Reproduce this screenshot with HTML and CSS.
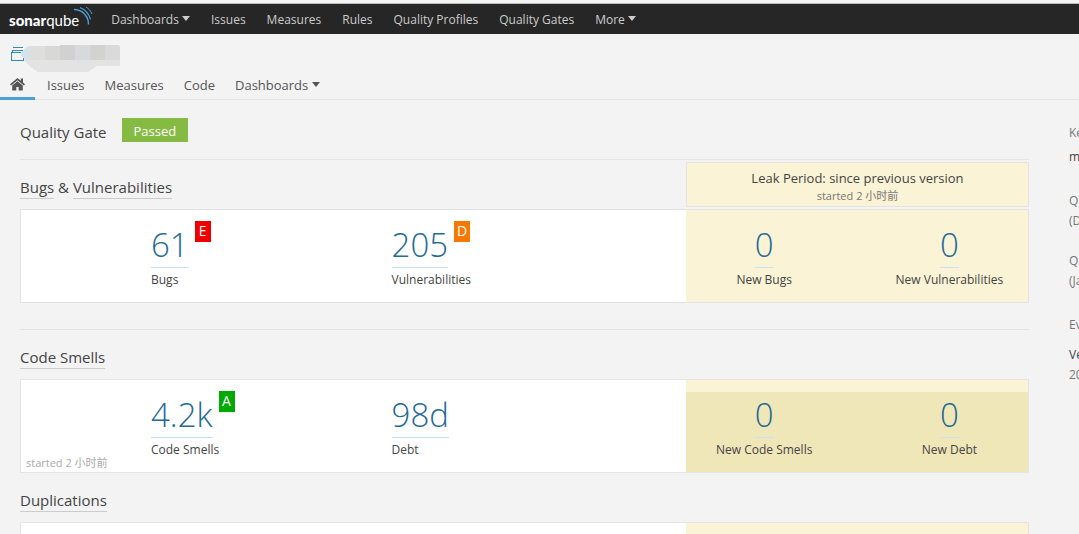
FILE: index.html
```html
<!DOCTYPE html>
<html lang="en">
<head>
<meta charset="utf-8">
<title>SonarQube</title>
<link rel="stylesheet" href="styles.css">
</head>
<body>
<nav class="navbar">
  <a class="logo" href="#" aria-label="sonarqube"><span class="logo-text"><b>sonar</b>qube</span><svg class="logo-waves" width="20" height="20" viewBox="0 0 20 20" fill="none" stroke="#4b9fd5"><path d="M1 3.500C9 3.500 15.500 10 15.500 18.500" stroke-width="1.500"/><path d="M7 1.500C12 3.500 16 8 17.500 13.500" stroke-width="1.200"/><path d="M13 1C15.500 2.500 17.800 5 19 8" stroke-width="1"/></svg></a>
  <a href="#">Dashboards <i class="caret"></i></a>
  <a href="#">Issues</a>
  <a href="#">Measures</a>
  <a href="#">Rules</a>
  <a href="#">Quality Profiles</a>
  <a href="#">Quality Gates</a>
  <a href="#">More <i class="caret"></i></a>
</nav>
<header class="context">
  <div class="project">
    <svg width="110" height="30" viewBox="0 0 110 30" shape-rendering="crispEdges">
      <path d="M3 4.500h10M2.500 9V7.500h11V9M1.500 9.500h12v8h-12z" fill="none" stroke="#2d8bc0"/>
      <path d="M11 10l3-4 5-3v15l-5-2-3-3z" fill="#d2e3ee"/>
      <path d="M13 17h97v6H87l-9 6H28l-9-6z" fill="#e3e3e3"/>
      <path d="M19 3h16v14H19z" fill="#dededd"/><path d="M35 3h15v14H35z" fill="#d8d8d6"/>
      <path d="M50 2h15v15H50z" fill="#d1d1d1"/><path d="M65 2h15v15H65z" fill="#d8d9dc"/>
      <path d="M80 2h15v15H80z" fill="#d2d2d1"/><path d="M95 2h13l2 2v13H95z" fill="#dadada"/>
    </svg>
  </div>
  <nav class="tabs">
    <a class="home" href="#" aria-label="Home"><svg width="15" height="13" viewBox="0 0 15 13" fill="#555"><path d="M7.500 0L0 6.300l1.100 1.300L7.500 2.300l6.400 5.300L15 6.300l-2-1.700V.6h-2.200v2.100z"/><path d="M7.500 3.200L2.200 7.600V12.600h4.100V9h2.400v3.600h4.100V7.600z"/></svg></a>
    <a href="#">Issues</a>
    <a href="#">Measures</a>
    <a href="#">Code</a>
    <a href="#">Dashboards <i class="caret"></i></a>
  </nav>
</header>
<div class="page">
  <main class="overview">
    <div class="gate"><h2>Quality Gate</h2><span class="badge">Passed</span></div>
    <section class="domain ruled">
      <div class="domain-head">
        <h2><a href="#">Bugs</a> &amp; <a href="#">Vulnerabilities</a></h2>
        <div class="legend">Leak Period: since previous version<small>started 2 小时前</small></div>
      </div>
      <div class="panel">
        <div class="measures">
          <div class="measure"><div class="value"><a href="#">61</a><span class="rating rating-e">E</span></div>Bugs</div>
          <div class="measure"><div class="value"><a href="#">205</a><span class="rating rating-d">D</span></div>Vulnerabilities</div>
        </div>
        <div class="leak">
          <div class="measure"><div class="value"><a href="#">0</a></div>New Bugs</div>
          <div class="measure"><div class="value"><a href="#">0</a></div>New Vulnerabilities</div>
        </div>
      </div>
    </section>
    <section class="domain ruled">
      <div class="domain-head"><h2><a href="#">Code Smells</a></h2></div>
      <div class="panel">
        <div class="measures">
          <div class="measure"><div class="value"><a href="#">4.2k</a><span class="rating rating-a">A</span></div>Code Smells</div>
          <div class="measure"><div class="value"><a href="#">98d</a></div>Debt</div>
          <span class="started">started 2 小时前</span>
        </div>
        <div class="leak trend">
          <div class="measure"><div class="value"><a href="#">0</a></div>New Code Smells</div>
          <div class="measure"><div class="value"><a href="#">0</a></div>New Debt</div>
        </div>
      </div>
    </section>
    <section class="domain last">
      <div class="domain-head"><h2><a href="#">Duplications</a></h2></div>
      <div class="panel">
        <div class="measures"></div>
        <div class="leak"></div>
      </div>
    </section>
  </main>
  <aside class="meta">
    <dl>
      <dt>Ke</dt><dd class="strong">m</dd>
      <dt>Q</dt><dd>(D</dd>
      <dt>Q</dt><dd class="spaced">(Ja</dd>
      <dt>Ev</dt><dd class="event"><b>Ve</b>20</dd>
    </dl>
  </aside>
</div>
</body>
</html>
```
FILE: styles.css
```css
* { box-sizing: border-box; }
html, body { height: 100%; }
body {
  margin: 0;
  display: flex;
  flex-direction: column;
  overflow: hidden;
  background: #f3f3f3;
  color: #444;
  font: 12px/20px "Segoe UI", "Open Sans", "Noto Sans CJK SC", sans-serif;
}
a { color: inherit; text-decoration: none; }
h2 { margin: 0; font-size: 15px; font-weight: 400; line-height: 20px; }

.navbar {
  flex: none;
  display: flex;
  align-items: center;
  gap: 21px;
  height: 31px;
  margin-top: 3px;
  padding: 2px 0 0 9px;
  border-top: 1px solid #bbb;
  background: #262626;
  color: #ccc;
}
.logo { display: flex; align-items: center; margin-right: -3px; color: #fff; }
.logo-text { font: 15px/20px Lato, sans-serif; }
.logo-text b { font-weight: 900; }
.logo-waves { margin: -8px 0 0 -6px; }
.caret {
  display: inline-block;
  border: 4px solid transparent;
  border-top: 5px solid currentColor;
  border-bottom: 0;
  vertical-align: 3px;
}

.context { flex: none; border-bottom: 1px solid #e4e4e4; }
.project { height: 38px; padding: 9px 0 0 10px; }
.project svg { display: block; }
.tabs { display: flex; gap: 20px; color: #555; }
.tabs a { height: 27px; padding-top: 3px; font-size: 13px; }
.tabs .home {
  width: 35px;
  height: 28px;
  margin: 0 -8px -1px 0;
  padding: 6px 0 0 10px;
  border-bottom: 3px solid #4b9fd5;
}
.home svg { display: block; }

.page { flex: 1; display: flex; min-height: 0; }
.overview { flex: 1; padding: 18px 0 0 20px; overflow: hidden; }
.gate { display: flex; align-items: flex-start; gap: 15px; height: 41px; }
.gate h2 { padding-top: 4px; }
.badge {
  height: 24px;
  padding: 3px 12px;
  background: #85bb43;
  color: #fff;
  font-size: 13px;
}
.ruled { border-top: 1px solid #e4e4e4; padding-bottom: 26px; }
.domain-head { display: flex; align-items: flex-start; justify-content: space-between; height: 49px; }
.domain-head h2 { margin-top: 17px; }
.domain-head h2 a { display: inline-block; height: 22px; border-bottom: 1px solid #ccc; }
.legend {
  width: 34%;
  height: 45px;
  margin-top: 2px;
  padding-top: 5px;
  border: 1px solid #e4e4e4;
  background: #fbf3d5;
  font-size: 13px;
  text-align: center;
}
.legend small { display: block; color: #777; font-size: 11px; line-height: 16px; }
.last { margin-top: -26px; }

.panel { display: flex; height: 94px; border: 1px solid #e4e4e4; background: #fff; }
.measures {
  position: relative;
  width: 66%;
  display: grid;
  grid-template-columns: 45% 55%;
  padding-left: 130px;
}
.leak {
  width: 34%;
  display: grid;
  grid-template-columns: 1fr 1fr;
  column-gap: 28px;
  background: #fbf3d5;
  text-align: center;
}
.trend { background: linear-gradient(#fbf3d5 12px, #f0e7b8 12px); }
.measure { padding-top: 11px; white-space: nowrap; }
.value { display: flex; gap: 6px; height: 48px; margin-bottom: 1px; }
.leak .value { justify-content: center; }
.value a {
  height: 47px;
  border-bottom: 1px solid #cae3f2;
  color: #236a97;
  font-size: 33px;
  font-weight: 300;
  line-height: 48px;
}
.rating { width: 16px; height: 21px; color: #fff; font-size: 14px; text-align: center; }
.rating-e { background: #e00; }
.rating-d { background: #f77700; }
.rating-a { background: #0a0; }
.started { position: absolute; left: 5px; bottom: 0; color: #aaa; font-size: 11px; line-height: 18px; }

.meta { flex: none; width: 50px; padding-left: 40px; padding-top: 23px; overflow: hidden; white-space: nowrap; }
.meta dl { margin: 0; color: #777; }
.meta dd { margin: 0 0 20px; }
.meta dd.strong { margin: 4px 0 24px; color: #444; }
.meta dd.spaced { margin-bottom: 24px; }
.meta .event { margin: 10px 0 0; }
.meta .event b { display: block; color: #444; font-weight: 400; }
```
